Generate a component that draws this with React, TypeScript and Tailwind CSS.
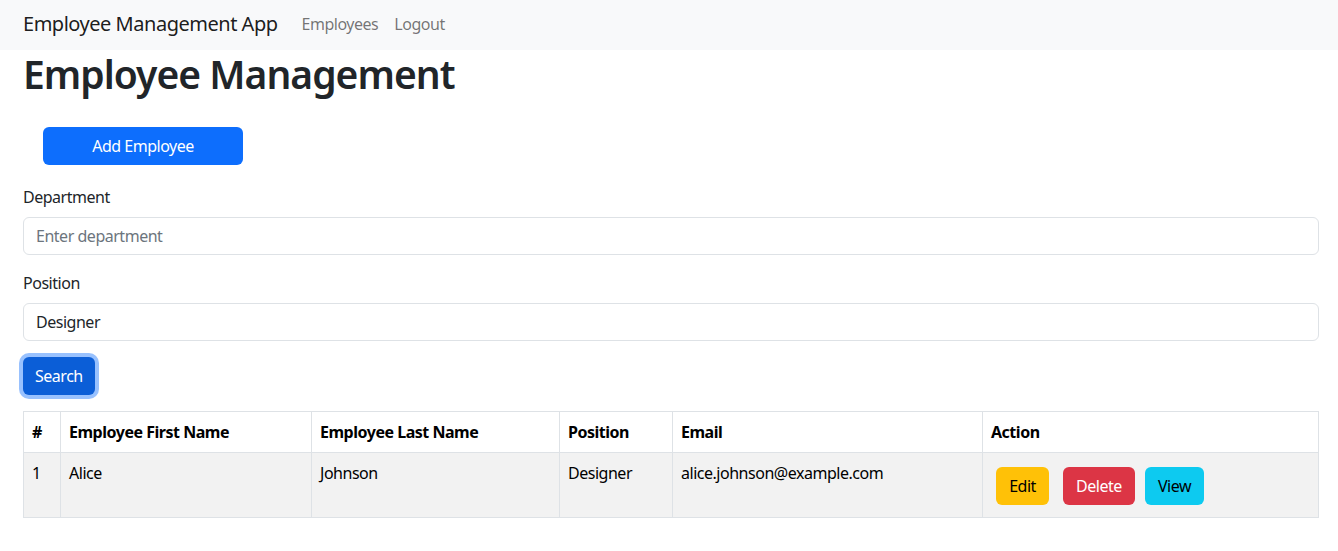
import React from "react";

const font = { fontFamily: '"Segoe UI", "Noto Sans", "Open Sans", sans-serif' };

export default function App() {
  return (
    <div className="min-h-[551px] bg-white text-[#212529] text-[16px] leading-[24px] tracking-[-0.03em]" style={font}>
      <nav className="h-[50px] bg-[#f8f9fa] flex items-center px-[23px] pb-[2px]">
        <span className="text-[20px] leading-[30px] text-black/90 mr-[16px]">Employee Management App</span>
        <a className="px-[8px] text-black/55">Employees</a>
        <a className="px-[8px] text-black/55">Logout</a>
      </nav>
      <div className="pl-[23px] pr-[19px]">
        <h1 className="text-[39px] leading-[48px] font-semibold tracking-[-0.025em]">Employee Management</h1>
        <div className="pt-[29px] pl-[20px]">
          <button className="w-[200px] h-[38px] rounded-[6px] bg-[#0d6efd] text-white">Add Employee</button>
        </div>
        <div className="mt-[20px]">
          <label className="block mb-[8px]">Department</label>
          <input
            className="block w-full h-[38px] px-[12px] border border-[#dee2e6] rounded-[6px] placeholder:text-[#6c757d] outline-none tracking-[-0.03em]"
            placeholder="Enter department"
          />
        </div>
        <div className="mt-[16px]">
          <label className="block mb-[8px]">Position</label>
          <input
            className="block w-full h-[38px] px-[12px] border border-[#dee2e6] rounded-[6px] outline-none text-[#212529] tracking-[-0.03em]"
            defaultValue="Designer"
          />
        </div>
        <button className="mt-[16px] h-[38px] px-[12px] rounded-[6px] bg-[#0b5ed7] text-white shadow-[0_0_0_4px_rgba(49,132,253,0.5)]">
          Search
        </button>
        <table className="mt-[16px] w-full border-collapse text-black">
          <thead>
            <tr className="h-[41px]">
              <th className="w-[37px] border border-[#dee2e6] px-[8px] text-left font-bold">#</th>
              <th className="w-[251px] border border-[#dee2e6] px-[8px] text-left font-bold">Employee First Name</th>
              <th className="w-[248px] border border-[#dee2e6] px-[8px] text-left font-bold">Employee Last Name</th>
              <th className="w-[113px] border border-[#dee2e6] px-[8px] text-left font-bold">Position</th>
              <th className="w-[310px] border border-[#dee2e6] px-[8px] text-left font-bold">Email</th>
              <th className="border border-[#dee2e6] px-[8px] text-left font-bold">Action</th>
            </tr>
          </thead>
          <tbody>
            <tr className="bg-[#f2f2f2] h-[65px]">
              <td className="border border-[#dee2e6] px-[8px] py-[8px] align-top">1</td>
              <td className="border border-[#dee2e6] px-[8px] py-[8px] align-top">Alice</td>
              <td className="border border-[#dee2e6] px-[8px] py-[8px] align-top">Johnson</td>
              <td className="border border-[#dee2e6] px-[8px] py-[8px] align-top">Designer</td>
              <td className="border border-[#dee2e6] px-[8px] py-[8px] align-top">alice.johnson@example.com</td>
              <td className="border border-[#dee2e6] px-[8px] py-[8px] align-top">
                <div className="flex items-center mt-[6px] ml-[5px]">
                  <button className="w-[53px] h-[38px] rounded-[6px] bg-[#ffc107] text-black">Edit</button>
                  <button className="ml-[14px] w-[72px] h-[38px] rounded-[6px] bg-[#dc3545] text-white">Delete</button>
                  <button className="ml-[10px] w-[59px] h-[38px] rounded-[6px] bg-[#0dcaf0] text-black">View</button>
                </div>
              </td>
            </tr>
          </tbody>
        </table>
      </div>
    </div>
  );
}
